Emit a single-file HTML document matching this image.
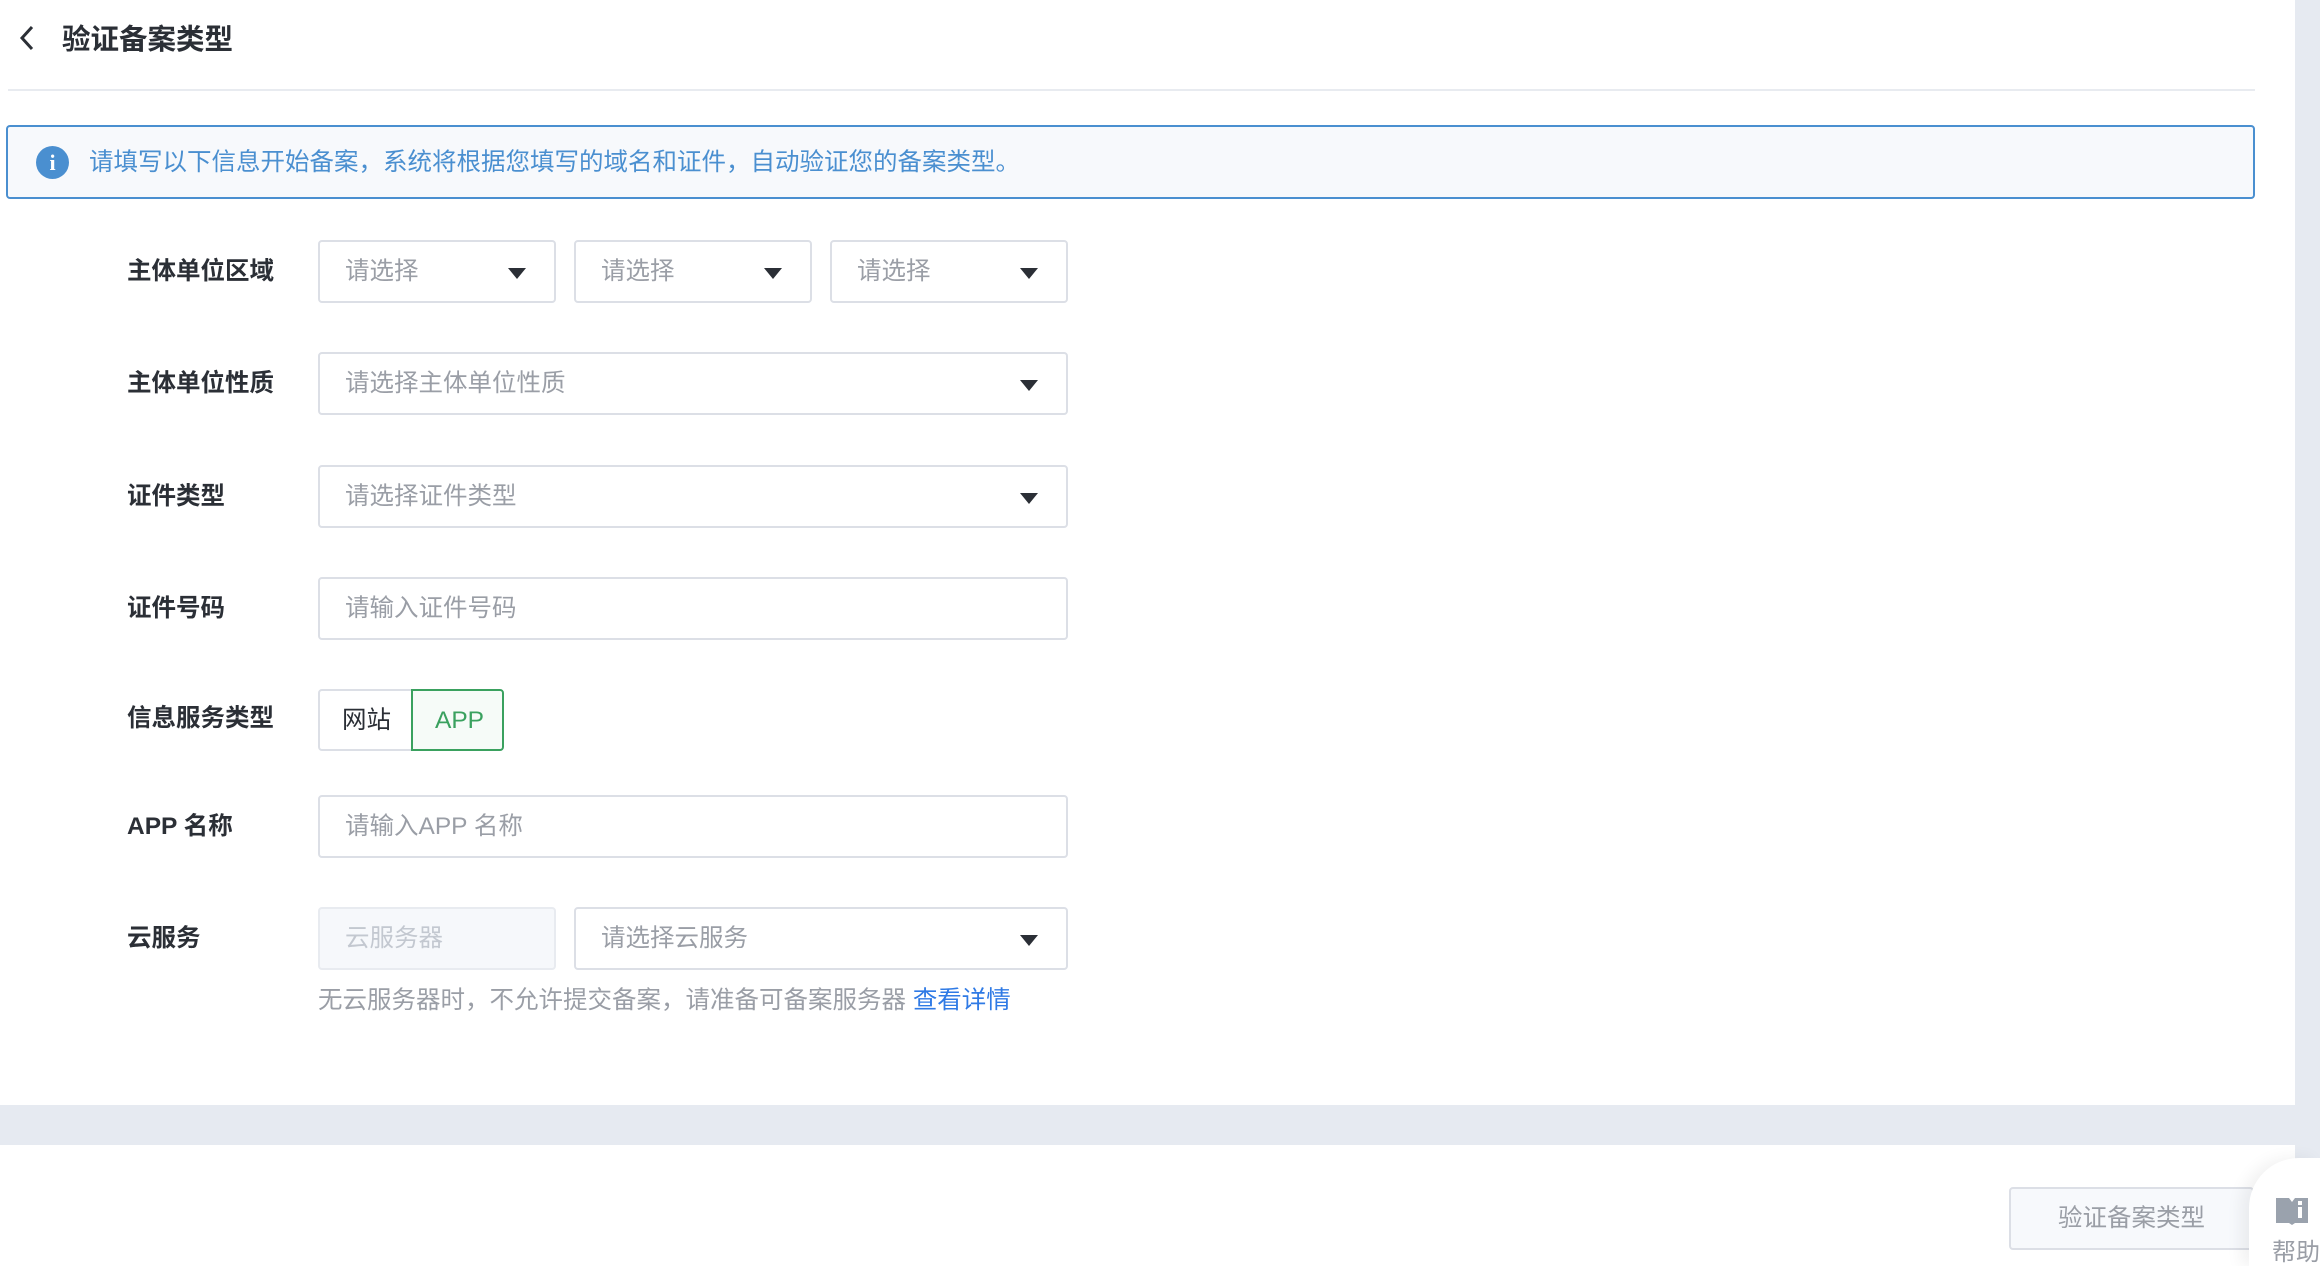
<!DOCTYPE html>
<html style="overflow:hidden;width:2320px;height:1266px"><head><meta charset="utf-8"><style>
*{margin:0;padding:0;box-sizing:border-box}
body{width:2320px;height:1266px;overflow:hidden;background:#e6eaf1;font-family:"Liberation Sans","Noto Sans CJK SC",sans-serif;position:relative}
.panel{position:absolute;left:0;top:0;width:2295px;height:1105px;background:#fff}
.panel2{position:absolute;left:0;top:1145px;width:2295px;height:121px;background:#fff}
.abs{position:absolute}
.title{left:62px;top:17px;font-size:28.5px;color:#2b2f36;font-weight:600}
.line{left:8px;top:89px;width:2247px;height:2px;background:#e8ebf0}
.info{left:6px;top:125px;width:2249px;height:74px;border:2px solid #4a8fd0;border-radius:4px;background:#f7f9fc}
.info span{position:absolute;left:81px;top:16px;font-size:24.5px;color:#4a8fd0}
.ic{position:absolute;left:28px;top:19px;width:33px;height:33px;border-radius:50%;background:#4a8fd0;color:#fff;font-weight:bold;font-size:22px;text-align:center;line-height:33px;font-family:"Liberation Serif",serif}
.lbl{left:127px;font-size:24.5px;color:#2b2f36;font-weight:600;line-height:30px}
.box{position:absolute;border:2px solid #dcdfe6;border-radius:4px;background:#fff;height:63px;font-size:24.5px;color:#9a9ea6;line-height:59px;padding-left:25px}
.box.sel::after{content:"";position:absolute;right:28px;top:26px;border-left:9px solid transparent;border-right:9px solid transparent;border-top:11px solid #2b2f36}
.help{left:318px;top:981px;font-size:24.5px;color:#9a9ea6}
.help b{color:#2f7ae5;font-weight:normal}
</style></head><body>
<div class="panel"></div><div class="panel2"></div>
<svg class="abs" style="left:16px;top:24px" width="22" height="28"><path d="M16 3 L6 14 L16 25" stroke="#2b2f36" stroke-width="3" fill="none"/></svg>
<div class="abs title">验证备案类型</div>
<div class="abs line"></div>
<div class="abs info"><div class="ic">i</div><span>请填写以下信息开始备案，系统将根据您填写的域名和证件，自动验证您的备案类型。</span></div>

<div class="abs lbl" style="top:257px">主体单位区域</div>
<div class="box sel" style="left:318px;top:240px;width:238px">请选择</div>
<div class="box sel" style="left:574px;top:240px;width:238px">请选择</div>
<div class="box sel" style="left:830px;top:240px;width:238px">请选择</div>

<div class="abs lbl" style="top:369px">主体单位性质</div>
<div class="box sel" style="left:318px;top:352px;width:750px">请选择主体单位性质</div>

<div class="abs lbl" style="top:482px">证件类型</div>
<div class="box sel" style="left:318px;top:465px;width:750px">请选择证件类型</div>

<div class="abs lbl" style="top:594px">证件号码</div>
<div class="box" style="left:318px;top:577px;width:750px">请输入证件号码</div>

<div class="abs lbl" style="top:704px">信息服务类型</div>
<div class="box" style="left:318px;top:689px;width:96px;height:62px;color:#2b2f36;padding-left:22px;border-radius:4px 0 0 4px">网站</div>
<div class="box" style="left:411px;top:689px;width:93px;height:62px;color:#3aa15f;border-color:#3aa15f;background:#f6fbf8;padding-left:22px;border-radius:0 4px 4px 0">APP</div>

<div class="abs lbl" style="top:812px">APP 名称</div>
<div class="box" style="left:318px;top:795px;width:750px">请输入APP 名称</div>

<div class="abs lbl" style="top:924px">云服务</div>
<div class="box" style="left:318px;top:907px;width:238px;background:#f6f8fb;border-color:#e8ebf0;color:#c3c8d0">云服务器</div>
<div class="box sel" style="left:574px;top:907px;width:494px">请选择云服务</div>
<div class="abs help">无云服务器时，不允许提交备案，请准备可备案服务器 <b>查看详情</b></div>

<div class="box" style="left:2009px;top:1187px;width:245px;height:63px;background:#f7f9fc;color:#9a9ea6;text-align:center;padding:0">验证备案类型</div>
<div class="abs" style="left:2249px;top:1158px;width:71px;height:108px;border-radius:50px 0 0 0;background:#fff;box-shadow:-8px 0 16px rgba(0,0,0,0.06)"></div>
<svg class="abs" style="left:2275px;top:1196px" width="34" height="30"><path d="M1 2 H14 L17 6 L20 2 H33 V27 H20 L17 29 L14 27 H1 Z" fill="#9aa2ad"/><rect x="23" y="5" width="4" height="4" fill="#fff"/><rect x="23" y="11" width="4" height="11" fill="#fff"/></svg>
<div class="abs" style="left:2272px;top:1232px;font-size:24px;color:#9a9ea6">帮助</div>
</body></html>
